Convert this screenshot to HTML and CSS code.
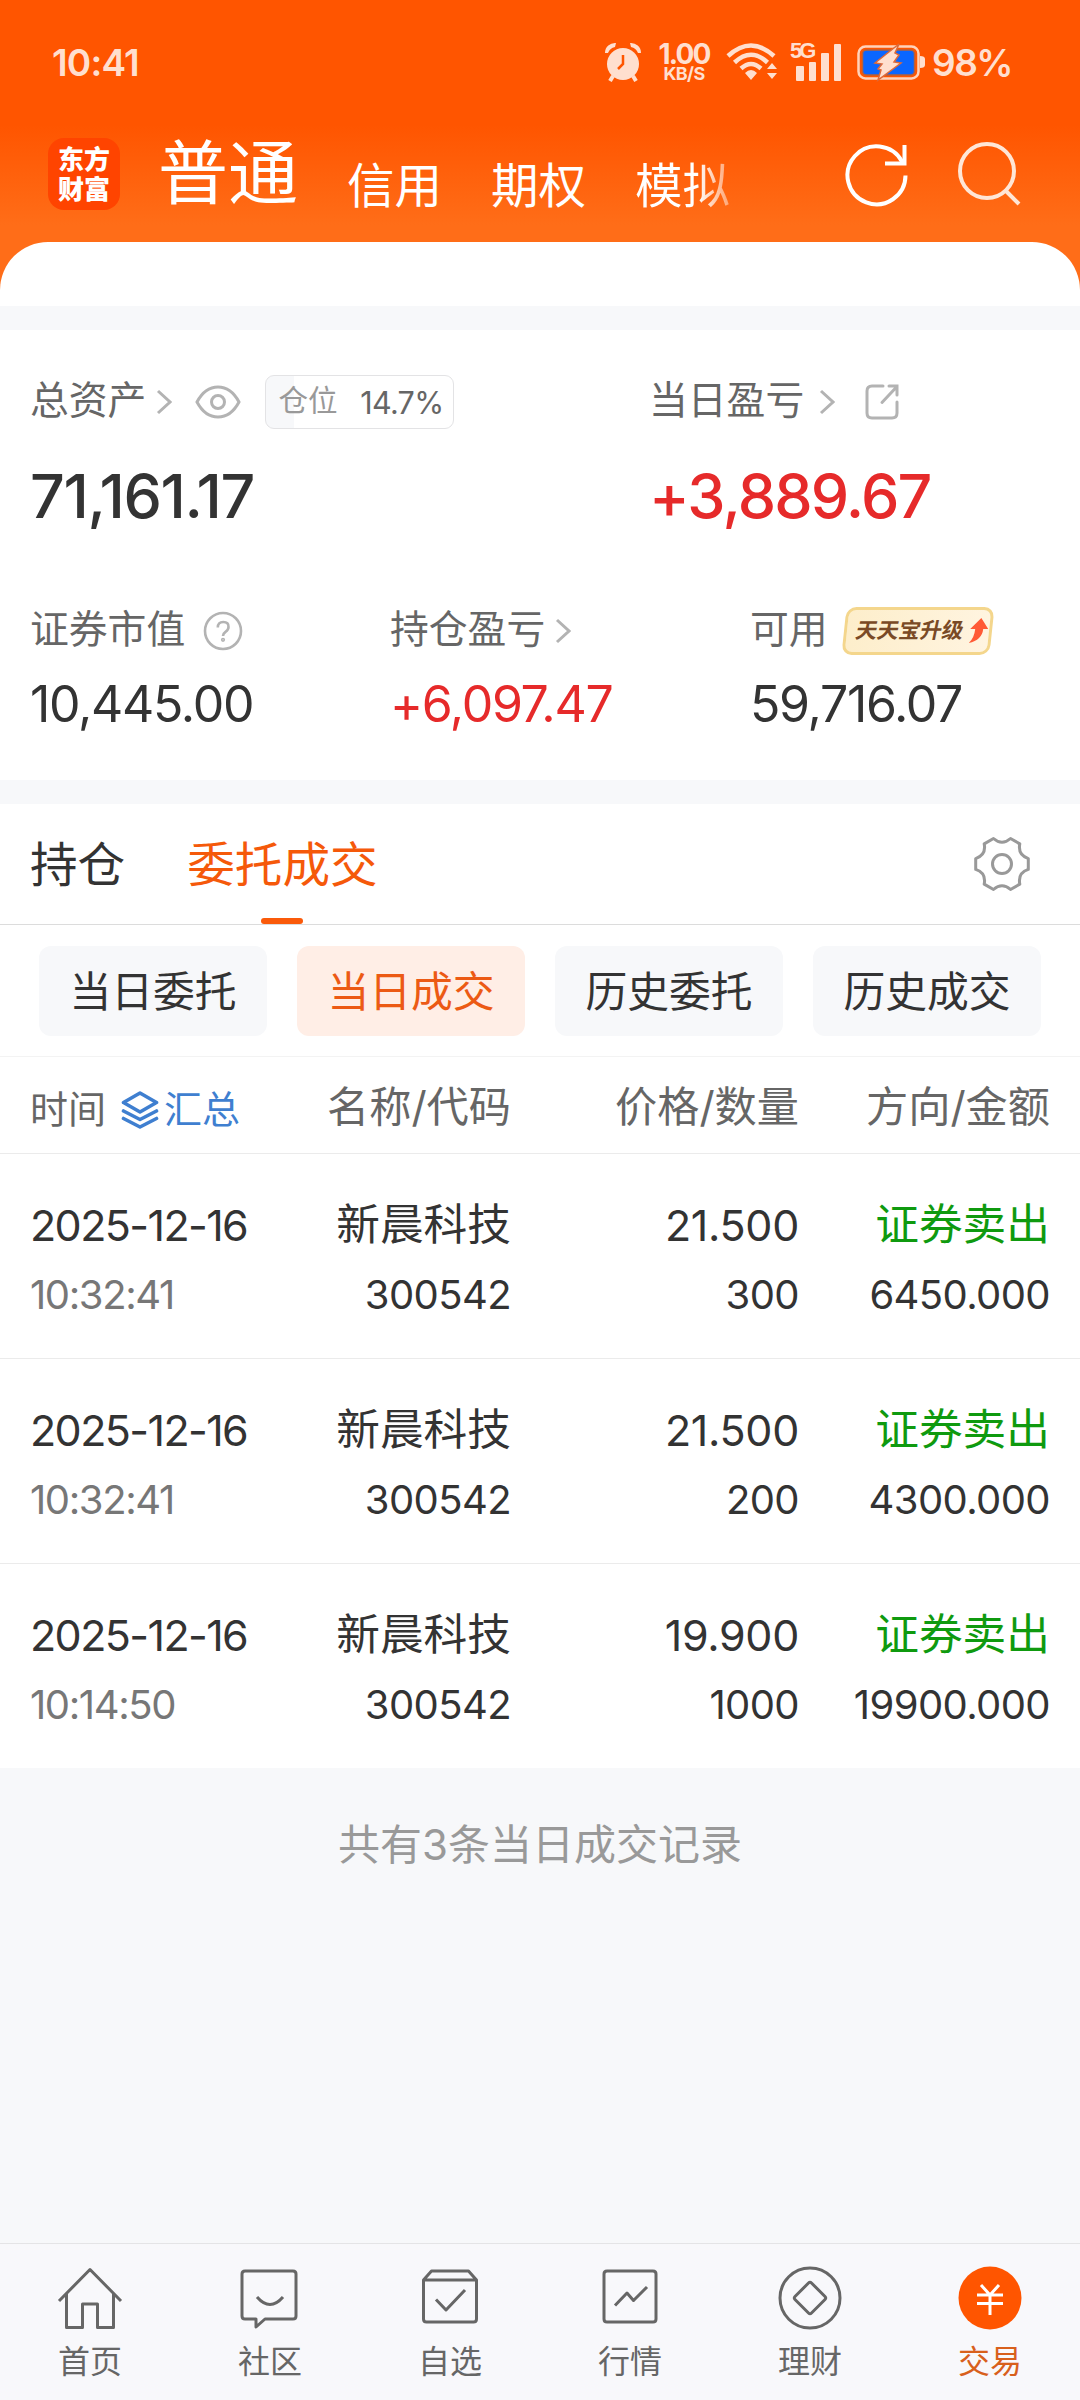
FILE: index.html
```html
<!DOCTYPE html>
<html lang="zh-CN">
<head>
  <meta charset="UTF-8" />
  <title>交易 - 当日成交</title>
  <link rel="stylesheet" href="styles.css">
</head>
<body>
  <header class="top">
    <div class="status">
      <span class="clock">10:41</span>
      <div class="status-icons">
        <svg class="i-alarm" width="38" height="40" viewBox="0 0 38 40">
          <circle cx="19" cy="22" r="16" fill="#ffdfcf"/>
          <path d="M1 11a10 10 0 0 1 11-10l-1 4q-5 1-7 6zM37 11a10 10 0 0 0-11-10l1 4q5 1 7 6z" fill="#ffdfcf"/>
          <path d="M9 34l-3 5M29 34l3 5" stroke="#ffdfcf" stroke-width="4"/>
          <path d="M19 13v9l-5 5" stroke="#ff5500" stroke-width="2.5" fill="none"/>
        </svg>
        <div class="speed"><b>1.00</b><small>KB/S</small></div>
        <svg class="i-wifi" width="52" height="40" viewBox="0 0 52 40">
          <g fill="none" stroke="#ffdfcf" stroke-width="4.5">
            <path d="M2 14Q25-7 48 14"/>
            <path d="M8.500 20.500Q25 5 41.500 20.500"/>
            <path d="M15 26.500Q25 17.500 35 26.500"/>
          </g>
          <path d="M19 31Q25 25 31 31L25 38zM41 27l5-6 5 6zM41 31l5 6 5-6z" fill="#ffdfcf"/>
        </svg>
        <div class="signal">
          <span>5G</span>
          <svg width="46" height="38" viewBox="0 0 46 38" fill="#ffdfcf">
            <rect x="0" y="23" width="8" height="15" rx="1"/>
            <rect x="13" y="19" width="7" height="19" rx="1"/>
            <rect x="25" y="10" width="8" height="28" rx="1"/>
            <rect x="38" y="1" width="7" height="37" rx="1"/>
          </svg>
        </div>
        <svg class="i-battery" width="68" height="40" viewBox="0 0 68 40">
          <rect x="1.500" y="4.500" width="60" height="32" rx="7" fill="none" stroke="#ffd3ba" stroke-width="2.500"/>
          <rect x="5.500" y="8" width="52" height="25" rx="4" fill="#0a66ff" stroke="#b4603c" stroke-width="1.500"/>
          <path d="M63 14q5 0 5 3v6q0 3-5 3z" fill="#ffdfcf"/>
          <path d="M42 2L18 21l7 1-4 5 3 1-3 10 23-17-7-1 5-7-4-2z" fill="#ffdfcf" stroke="#dd6a3a" stroke-width="1.500"/>
        </svg>
        <span class="percent">98%</span>
      </div>
    </div>
    <div class="title-bar">
      <div class="logo"><div>东方</div><div>财富</div></div>
      <nav class="modes">
        <a class="mode on">普通</a>
        <a class="mode">信用</a>
        <a class="mode">期权</a>
        <a class="mode fade">模拟</a>
      </nav>
      <svg class="i-refresh" width="64" height="66" viewBox="0 0 64 66" fill="none" stroke="#fff" stroke-width="4">
        <path d="M60.500 33.500A29 29 0 1 1 57 19.500L58 21.500"/>
        <path d="M59.500 3v18.500H40"/>
      </svg>
      <svg class="i-search" width="64" height="66" viewBox="0 0 64 66" fill="none" stroke="#ffe6d6" stroke-width="4">
        <circle cx="29" cy="30" r="27"/>
        <path d="M47 49l14 14"/>
      </svg>
    </div>
    <div class="sheet-top"></div>
  </header>

  <section class="assets">
    <div class="row-main">
      <div>
        <div class="label">
          <span>总资产</span>
          <svg class="chev" width="16" height="26" viewBox="0 0 16 26"><path d="M2 2l12 11L2 24"/></svg>
          <svg class="i-eye" width="46" height="34" viewBox="0 0 46 34" fill="none" stroke="#b3b3b3" stroke-width="3">
            <path d="M2 17Q10 2 23 2t21 15Q36 32 23 32T2 17z"/>
            <circle cx="23" cy="17" r="6.500"/>
          </svg>
          <div class="position"><span>仓位</span><em>14.7%</em></div>
        </div>
        <div class="big n1">71,161.17</div>
      </div>
      <div>
        <div class="label">
          <span>当日盈亏</span>
          <svg class="chev wide" width="16" height="26" viewBox="0 0 16 26"><path d="M2 2l12 11L2 24"/></svg>
          <svg class="i-share" width="34" height="36" viewBox="0 0 34 36" fill="none" stroke="#b3b3b3" stroke-width="3" stroke-linecap="round">
            <path d="M18 2H7Q2 2 2 7v22q0 5 5 5h20q5 0 5-5V18"/>
            <path d="M17 18.500L31.500 3M24 2h8v9"/>
          </svg>
        </div>
        <div class="big red">+3,889.67</div>
      </div>
    </div>
    <div class="row-sub">
      <div>
        <div class="label">
          <span>证券市值</span>
          <svg class="i-help" width="40" height="40" viewBox="0 0 40 40" fill="none" stroke="#b3b3b3" stroke-width="2.600">
            <circle cx="20" cy="20" r="18"/>
            <path d="M14.800 16.500q0-5.500 5.500-5.500t5.200 5q0 3-3 4.800-2.500 1.700-2.500 4.200"/>
            <circle cx="20" cy="28.800" r=".8"/>
          </svg>
        </div>
        <div class="mid">10,445.00</div>
      </div>
      <div>
        <div class="label">
          <span>持仓盈亏</span>
          <svg class="chev near" width="16" height="26" viewBox="0 0 16 26"><path d="M2 2l12 11L2 24"/></svg>
        </div>
        <div class="mid red">+6,097.47</div>
      </div>
      <div>
        <div class="label">
          <span>可用</span>
          <div class="upgrade">
            <b>天天宝升级</b>
            <svg width="20" height="26" viewBox="0 0 20 26">
              <path d="M11 0l8 11h-5Q14 22 1 25q5-5 5-14H1z" fill="#ff5a36"/>
            </svg>
          </div>
        </div>
        <div class="mid">59,716.07</div>
      </div>
    </div>
  </section>

  <section class="records">
    <div class="tabs">
      <a class="tab">持仓</a>
      <a class="tab on">委托成交</a>
      <svg class="i-gear" width="56" height="56" viewBox="-28 -28 56 56" fill="none" stroke="#999" stroke-width="3" stroke-linejoin="round">
        <path d="M-8.500-25.500Q0-18 8.500-25.500L17.800-20.100Q15.600-9 26.300-5.400V5.400Q15.600 9 17.800 20.100L8.500 25.500Q0 18-8.500 25.500L-17.800 20.100Q-15.600 9-26.300 5.400V-5.400Q-15.600-9-17.800-20.100z"/>
        <circle r="9.500"/>
      </svg>
    </div>
    <div class="chips">
      <a class="chip">当日委托</a>
      <a class="chip on">当日成交</a>
      <a class="chip">历史委托</a>
      <a class="chip">历史成交</a>
    </div>
    <div class="thead">
      <div class="th-time">
        时间
        <svg width="38" height="38" viewBox="0 0 38 38" fill="none" stroke="#3f7fd0" stroke-width="3.600" stroke-linejoin="round" stroke-linecap="round">
          <path d="M19 2L2.500 11.500 19 21l16.500-9.500z"/>
          <path d="M2.500 20L19 28.500 35.500 20M2.500 27.500L19 36l16.500-8.500"/>
        </svg>
        <span>汇总</span>
      </div>
      <div>名称/代码</div>
      <div>价格/数量</div>
      <div>方向/金额</div>
    </div>
    <div class="trade">
      <div class="date">2025-12-16<small class="time">10:32:41</small></div>
      <div><b>新晨科技</b><small>300542</small></div>
      <div>21.500<small>300</small></div>
      <div><b class="sell">证券卖出</b><small>6450.000</small></div>
    </div>
    <div class="trade">
      <div class="date">2025-12-16<small class="time">10:32:41</small></div>
      <div><b>新晨科技</b><small>300542</small></div>
      <div>21.500<small>200</small></div>
      <div><b class="sell">证券卖出</b><small>4300.000</small></div>
    </div>
    <div class="trade">
      <div class="date">2025-12-16<small class="time">10:14:50</small></div>
      <div><b>新晨科技</b><small>300542</small></div>
      <div>19.900<small>1000</small></div>
      <div><b class="sell">证券卖出</b><small>19900.000</small></div>
    </div>
  </section>

  <p class="total">共有3条当日成交记录</p>

  <footer class="nav">
    <a>
      <svg width="66" height="66" viewBox="0 0 66 66"><path d="M2 35L33 3.500 64 35M9.500 28v33.500h16V38h15v23.500h16V28"/></svg>
      首页
    </a>
    <a>
      <svg width="66" height="66" viewBox="0 0 66 66"><path d="M8 5h48q3 0 3 3v42q0 3-3 3H28l-9 8v-8H8q-3 0-3-3V8q0-3 3-3zM20 31q13 15 26 0"/></svg>
      社区
    </a>
    <a>
      <svg width="66" height="66" viewBox="0 0 66 66"><path d="M6.500 14l8-9h37l8 9v39q0 3-3 3h-47q-3 0-3-3zM6.500 14h53M19 33.500l10 10.500 19-20"/></svg>
      自选
    </a>
    <a>
      <svg width="66" height="66" viewBox="0 0 66 66"><path d="M10 5h46q3 0 3 3v45q0 3-3 3H10q-3 0-3-3V8q0-3 3-3zM18 39.500L30 27l6.500 7.500L50 21"/></svg>
      行情
    </a>
    <a>
      <svg width="66" height="66" viewBox="0 0 66 66"><circle cx="33" cy="32" r="30"/><path d="M31.500 17q1.500-1.500 3 0L48 30.500q1.500 1.500 0 3L34.500 47q-1.500 1.500-3 0L18 33.500q-1.500-1.500 0-3z"/></svg>
      理财
    </a>
    <a class="on">
      <svg width="66" height="66" viewBox="0 0 66 66"><circle cx="33" cy="32" r="31.500"/><path d="M24 19l9 10 9-10M20 29h26M20 37.500h26M33 29v20"/></svg>
      交易
    </a>
  </footer>
</body>
</html>
```
FILE: styles.css
```css
* { box-sizing: border-box; }
body {
  margin: 0;
  width: 1080px;
  height: 2400px;
  display: flex;
  flex-direction: column;
  font-family: Inter, "Noto Sans CJK SC", sans-serif;
  font-weight: 400;
  background: #f7f8fa;
  color: #333;
  overflow: hidden;
}
svg { display: block; flex: none; }
a { color: inherit; text-decoration: none; }

/* 顶部 */
.top {
  height: 306px;
  background: linear-gradient(#ff5500 0, #ff5500 125px, #ff6d18 225px, #ff6d18 100%);
}
.status {
  height: 124px;
  padding: 0 68px 0 52px;
  display: flex;
  justify-content: space-between;
  align-items: center;
  color: #ffdfcf;
}
.clock { font-size: 37px; font-weight: 600; letter-spacing: -0.8px; }
.status-icons { display: flex; align-items: center; }
.speed {
  width: 56px;
  margin: 0 14px;
  text-align: center;
}
.speed b { display: block; font-size: 28px; line-height: 23px; font-weight: 700; letter-spacing: -1.8px; }
.speed small { display: block; font-size: 18px; line-height: 16px; font-weight: 700; letter-spacing: -0.6px; }
.signal { position: relative; width: 52px; padding-left: 6px; margin: 0 15px 0 12px; }
.signal span {
  position: absolute;
  left: 0;
  top: -3px;
  font: 700 22px/22px "Liberation Sans Narrow", "Liberation Sans", sans-serif;
  letter-spacing: -3px;
}
.percent { width: 80px; margin-left: 7px; font-size: 37px; font-weight: 600; letter-spacing: -1.5px; white-space: nowrap; }
.title-bar {
  height: 118px;
  padding: 0 58px 0 48px;
  display: flex;
  align-items: flex-start;
}
.logo {
  width: 72px;
  height: 72px;
  margin-top: 14px;
  padding-top: 5px;
  border-radius: 16px;
  background: #ff4400;
  color: #fff;
  font: 900 26px/30px "Noto Sans CJK SC", sans-serif;
  text-align: center;
}
.modes {
  width: 725px;
  padding-left: 38px;
  display: flex;
  gap: 49px;
  color: #fff;
  white-space: nowrap;
}
.mode { font-size: 47.500px; line-height: 124px; }
.mode.on { font-size: 70px; line-height: 100px; }
.fade {
  background: linear-gradient(90deg, #fff 65%, rgba(255,255,255,0.4));
  -webkit-background-clip: text;
  color: transparent;
}
.i-refresh { margin-top: 18px; }
.i-search { margin: 17px 0 0 49px; }
.sheet-top { height: 64px; background: #fff; border-radius: 48px 48px 0 0; }

/* 资产 */
.assets {
  margin-top: 24px;
  height: 450px;
  padding: 45px 30px 0;
  background: #fff;
}
.row-main { display: grid; grid-template-columns: 619px 1fr; height: 229px; }
.row-sub { display: grid; grid-template-columns: 360px 360px 1fr; }
.label {
  height: 54px;
  display: flex;
  align-items: center;
  font-size: 38.800px;
  color: #666;
}
.label span { line-height: 54px; padding-bottom: 5px; }
.chev { margin-left: 10px; fill: none; stroke: #b3b3b3; stroke-width: 3; }
.chev.wide { margin-left: 15px; }
.chev.near { margin-left: 10px; }
.i-eye { margin-left: 23px; }
.position {
  width: 189px;
  height: 54px;
  margin-left: 24px;
  padding: 0 10px 0 12px;
  display: flex;
  justify-content: space-between;
  align-items: center;
  border: 1px solid #e3e3e5;
  border-radius: 9px;
  background: linear-gradient(90deg, #f7f8fa 28px, #fff 28px);
  font-size: 29.500px;
  color: #999;
}
.position em { font-style: normal; font-size: 30.500px; color: #666; letter-spacing: -0.7px; }
.i-share { margin-left: 30px; }
.i-help { margin-left: 18px; }
.big {
  margin-top: 31px;
  font-size: 61px;
  line-height: 72px;
  font-weight: 500;
  letter-spacing: -1.8px;
}
.n1 { letter-spacing: -1.300px; }
.mid { margin-top: 14px; font-size: 50px; line-height: 64px; letter-spacing: -1.3px; }
.red { color: #e62a2a; }
.upgrade {
  width: 148px;
  height: 48px;
  margin-left: 16px;
  padding-left: 9px;
  display: flex;
  align-items: center;
  gap: 5px;
  border: 3px solid #f4d68c;
  border-radius: 10px;
  background: linear-gradient(90deg, #fdeecb, #fff4e0);
  transform: skewX(-6deg);
}
.upgrade b {
  font-size: 21.500px;
  line-height: 30px;
  padding-bottom: 2px;
  transform: skewX(-6deg);
  color: #7a4a26;
  white-space: nowrap;
}

/* 委托成交 */
.records { margin-top: 24px; background: #fff; }
.tabs {
  height: 121px;
  padding: 0 50px 0 30px;
  display: flex;
  align-items: center;
  border-bottom: 1px solid #dcdcdc;
  font-size: 47.600px;
}
.tab { height: 120px; line-height: 122px; margin-right: 62px; }
.tab.on { position: relative; color: #f5590a; }
.tab.on::after {
  content: "";
  position: absolute;
  left: 50%;
  bottom: 0;
  width: 42px;
  height: 6px;
  margin-left: -21px;
  border-radius: 3px;
  background: #fa5a0a;
}
.i-gear { margin-left: auto; }
.chips {
  height: 132px;
  padding: 21px 39px 0;
  display: grid;
  grid-template-columns: repeat(4, 228px);
  gap: 30px;
  border-bottom: 1px solid #f3f3f3;
}
.chip {
  height: 90px;
  border-radius: 12px;
  background: #f7f8fa;
  font-size: 41.800px;
  line-height: 93px;
  text-align: center;
}
.chip.on { background: #ffeee6; color: #ec5a14; }
.thead, .trade {
  display: grid;
  grid-template-columns: 230px 251px 288px 251px;
  padding: 0 30px;
  text-align: right;
  border-bottom: 1px solid #ebebeb;
}
.thead { height: 97px; line-height: 99px; font-size: 42.200px; color: #666; }
.th-time { display: flex; align-items: center; padding-top: 3px; font-size: 38px; white-space: nowrap; }
.th-time svg { margin: 0 5px 0 15px; }
.th-time span { color: #3f7fd0; }
.trade { height: 205px; padding-top: 43px; font-size: 43px; line-height: 56px; letter-spacing: -0.3px; }
.trade:last-child { border-bottom: 0; height: 204px; }
.trade .date { text-align: left; white-space: nowrap; letter-spacing: -1.6px; }
.trade b { display: block; font-weight: 400; font-size: 43.700px; letter-spacing: 0; }
.trade small { display: block; margin-top: 14px; font-size: 40px; line-height: 56px; letter-spacing: -0.6px; }
.trade .time { color: #777; letter-spacing: -1.400px; }
.sell { color: #0f9a0f; }
.total {
  margin: 46px 0 0;
  font-size: 42px;
  line-height: 62px;
  text-align: center;
  color: #999;
}

/* 底部导航 */
.nav {
  margin-top: auto;
  height: 157px;
  padding-top: 22px;
  display: grid;
  grid-template-columns: repeat(6, 1fr);
  border-top: 1px solid #e4e4e6;
  background: #f8f8fb;
  font-size: 32px;
  line-height: 60px;
  color: #666;
  text-align: center;
}
.nav svg { margin: 0 auto; fill: none; stroke: #666; stroke-width: 3; stroke-linejoin: round; }
.nav .on { color: #d8601c; }
.nav .on circle { fill: #ff5500; stroke: none; }
.nav .on path { stroke: #fff; }
```
